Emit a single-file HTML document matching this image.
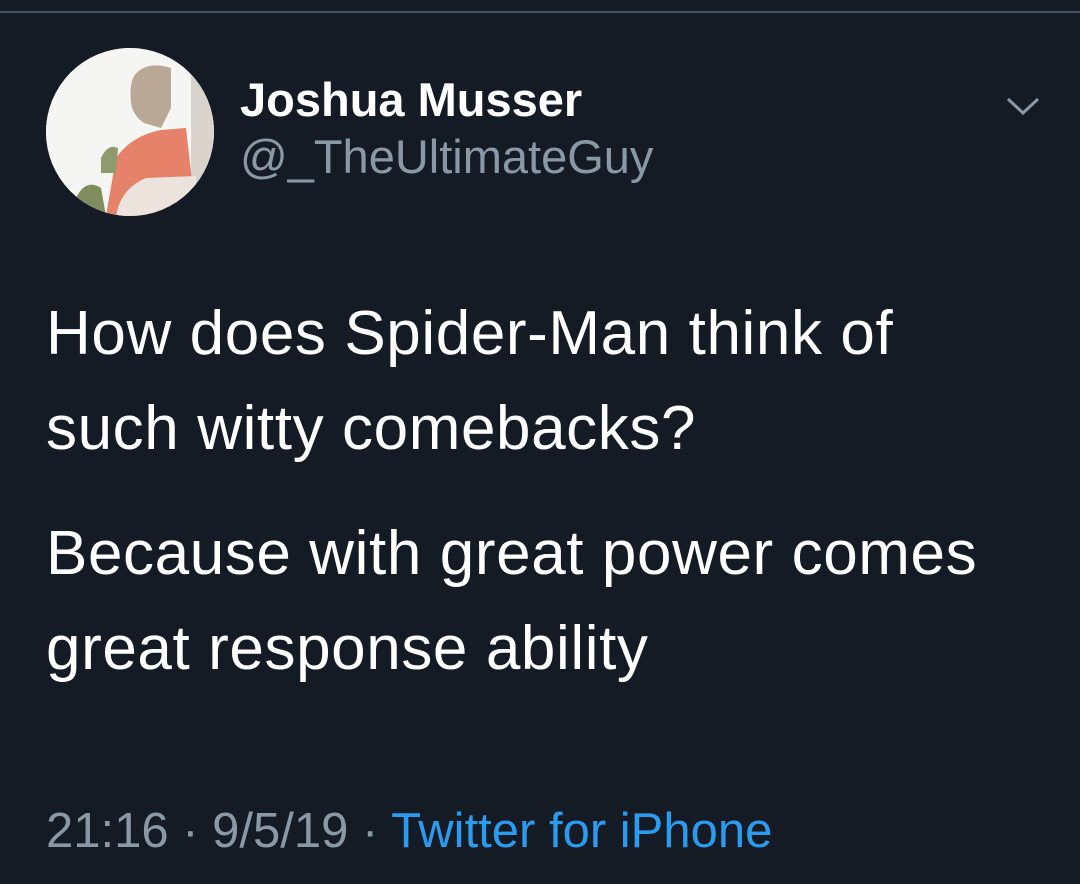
<!DOCTYPE html>
<html><head><style>
body{margin:0;width:1080px;height:884px;background:#141b25;overflow:hidden;font-family:"Liberation Sans",Arial,sans-serif;position:relative}
.line{position:absolute;left:0;top:11px;width:1080px;height:2px;background:#465260}
.av{position:absolute;left:46px;top:48px;width:168px;height:168px;border-radius:50%;overflow:hidden;background:#f4f4f2}
.t{position:absolute;white-space:nowrap;color:#fff;line-height:1.15}
</style></head><body>
<div class="line"></div>
<div class="av">
<svg width="168" height="168" viewBox="0 0 168 168">
<rect width="168" height="168" fill="#f5f5f3"/>
<rect x="145" y="0" width="23" height="168" fill="#d9d4cc"/>
<path d="M125 20 Q100 12 88 28 Q82 40 86 60 Q90 70 98 75 L115 80 L125 60 Z" fill="#b9a896"/>
<path d="M60 168 L70 110 Q85 88 115 82 L140 80 L150 168 Z" fill="#e7826a"/>
<path d="M70 168 Q75 140 100 130 L150 128 L150 168 Z" fill="#ece4dc"/>
<path d="M30 150 Q40 130 55 140 L60 168 L25 168 Z" fill="#7f8c5e"/>
<path d="M55 110 Q62 95 72 100 L70 125 L55 125 Z" fill="#8f9b6e"/>
</svg>
</div>
<div class="t" style="left:240px;top:73px;font-size:47px;font-weight:bold">Joshua Musser</div>
<div class="t" style="left:240px;top:130px;font-size:47px;color:#8a98a6">@_TheUltimateGuy</div>
<svg style="position:absolute;left:1004px;top:94px" width="38" height="24"><path d="M4 5 L19 19 L34 5" fill="none" stroke="#8a98a6" stroke-width="3"/></svg>
<div class="t" style="left:46px;top:286px;font-size:62px;line-height:95px;letter-spacing:0.6px">How does Spider-Man think of<br>such witty comebacks?</div>
<div class="t" style="left:46px;top:506px;font-size:62px;line-height:95px;letter-spacing:0.6px">Because with great power comes<br>great response ability</div>
<div class="t" style="left:46px;top:803px;font-size:49px;color:#8a98a6">21:16 · 9/5/19 · <span style="color:#2b9bf0">Twitter for iPhone</span></div>
</body></html>
